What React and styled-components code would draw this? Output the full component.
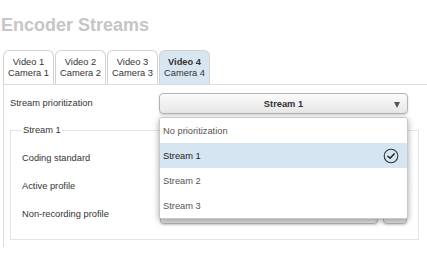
import React from 'react';
import styled, { createGlobalStyle } from 'styled-components';

const GlobalStyle = createGlobalStyle`
  body {
    margin: 0;
    background: #fff;
    font-family: "Liberation Sans", Arial, sans-serif;
    font-size: 9.3px;
    color: #333;
  }
`;

const tabs = [
  { video: 'Video 1', camera: 'Camera 1' },
  { video: 'Video 2', camera: 'Camera 2' },
  { video: 'Video 3', camera: 'Camera 3' },
  { video: 'Video 4', camera: 'Camera 4', active: true },
];

const options = ['No prioritization', 'Stream 1', 'Stream 2', 'Stream 3'];

function CheckCircle() {
  return (
    <svg width="16" height="16" viewBox="0 0 16 16">
      <circle cx="8" cy="8" r="6.8" fill="none" stroke="#333" strokeWidth="1.1" />
      <path d="M4.9 8.2 L7.1 10.3 L11.1 5.9" fill="none" stroke="#222" strokeWidth="1.5" strokeLinecap="round" strokeLinejoin="round" />
    </svg>
  );
}

function App() {
  return (
    <Page>
      <GlobalStyle />
      <Title>Encoder Streams</Title>
      <TabRow>
        {tabs.map((t) => (
          <Tab key={t.video} active={t.active}>
            <TabTop active={t.active}>{t.video}</TabTop>
            <div>{t.camera}</div>
          </Tab>
        ))}
      </TabRow>
      <Panel>
        <TopRow>
          <RowLabel>Stream prioritization</RowLabel>
          <SelectWrap>
            <Select>
              <span>Stream 1</span>
              <Arrow />
            </Select>
            <Menu>
              {options.map((o) => (
                <MenuItem key={o} selected={o === 'Stream 1'}>
                  {o}
                  {o === 'Stream 1' && <CheckCircle />}
                </MenuItem>
              ))}
            </Menu>
          </SelectWrap>
        </TopRow>
        <Fieldset>
          <Legend>Stream 1</Legend>
          <FieldRow>
            <span>Coding standard</span>
            <Control wide />
          </FieldRow>
          <FieldRow>
            <span>Active profile</span>
            <Control />
            <SmallButton />
          </FieldRow>
          <FieldRow>
            <span>Non-recording profile</span>
            <Control />
            <SmallButton />
          </FieldRow>
        </Fieldset>
      </Panel>
    </Page>
  );
}
export default App;

const Page = styled.div`
  width: 427px;
  height: 254px;
  overflow: hidden;
`;

const Title = styled.h1`
  margin: 16px 0 0 1px;
  font-size: 18px;
  line-height: 18px;
  font-weight: bold;
  color: #c6c6c6;
`;

const TabRow = styled.div`
  display: flex;
  gap: 1px;
  margin: 16px 0 0 3px;
  border-bottom: 1px solid #dcdcdc;
`;

const Tab = styled.div`
  box-sizing: border-box;
  width: 51px;
  height: 34px;
  padding-top: 6px;
  border: 1px solid #d2d2d2;
  border-bottom: none;
  border-radius: 6px 6px 0 0;
  background: ${(p) => (p.active ? '#d7e6f1' : '#fff')};
  text-align: center;
  line-height: 10.5px;
  color: #333;
`;

const TabTop = styled.div`
  font-weight: ${(p) => (p.active ? 'bold' : 'normal')};
`;

const Panel = styled.div`
  margin-left: 3px;
  border-left: 1px solid #dcdcdc;
  padding: 8px 0 7px 6px;
`;

const TopRow = styled.div`
  display: grid;
  grid-template-columns: 149px 249px;
  align-items: center;
`;

const RowLabel = styled.div`
  line-height: 11px;
`;

const SelectWrap = styled.div`
  position: relative;
`;

const Select = styled.div`
  box-sizing: border-box;
  height: 21px;
  display: flex;
  align-items: center;
  justify-content: center;
  position: relative;
  border: 1px solid #b4b4b4;
  border-radius: 4px;
  background: linear-gradient(#fbfbfb, #e6e6e6);
  box-shadow: 0 1px 2px rgba(0, 0, 0, 0.18);
  font-weight: bold;
  color: #333;
`;

const Arrow = styled.span`
  position: absolute;
  right: 7px;
  top: 8px;
  width: 0;
  height: 0;
  border-left: 3.5px solid transparent;
  border-right: 3.5px solid transparent;
  border-top: 6px solid #555;
`;

const Menu = styled.div`
  position: absolute;
  z-index: 2;
  top: 24px;
  left: 0;
  box-sizing: border-box;
  width: 249px;
  border: 1px solid #c9c9c9;
  border-radius: 3px;
  background: #fff;
  box-shadow: 0 2px 6px rgba(0, 0, 0, 0.35);
  overflow: hidden;
`;

const MenuItem = styled.div`
  height: 25px;
  display: flex;
  align-items: center;
  justify-content: space-between;
  padding: 0 8px 0 3px;
  background: ${(p) => (p.selected ? '#d5e6f2' : '#fff')};
  color: ${(p) => (p.selected ? '#222' : '#555')};
`;

const Fieldset = styled.fieldset`
  margin: 11px 0 0 0;
  width: 409px;
  box-sizing: border-box;
  border: 1px solid #e4e4e4;
  padding: 8px 0 11px 11px;
`;

const Legend = styled.legend`
  padding: 0 1px;
  line-height: 11px;
  color: #333;
`;

const FieldRow = styled.div`
  height: 28px;
  display: grid;
  grid-template-columns: 133px 218px 24px;
  column-gap: 5px;
  align-items: center;
  & > span {
    line-height: 11px;
  }
`;

const Control = styled.div`
  grid-column: ${(p) => (p.wide ? '2 / 4' : 'auto')};
  height: 20px;
  box-sizing: border-box;
  border: 1px solid #b4b4b4;
  border-radius: 4px;
  background: linear-gradient(#fbfbfb, #e6e6e6);
  box-shadow: 0 1px 2px rgba(0, 0, 0, 0.18);
`;

const SmallButton = styled(Control)``;
